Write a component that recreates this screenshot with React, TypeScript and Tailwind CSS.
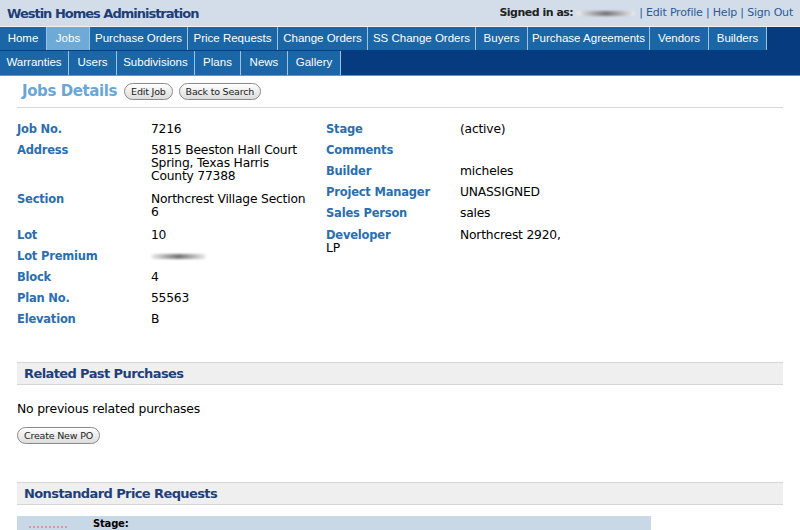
import React from "react";

const ROW1 = [
  { label: "Home", w: 47 },
  { label: "Jobs", w: 43, active: true },
  { label: "Purchase Orders", w: 98 },
  { label: "Price Requests", w: 90 },
  { label: "Change Orders", w: 90 },
  { label: "SS Change Orders", w: 108 },
  { label: "Buyers", w: 52 },
  { label: "Purchase Agreements", w: 122 },
  { label: "Vendors", w: 59 },
  { label: "Builders", w: 58 },
];

const ROW2 = [
  { label: "Warranties", w: 69 },
  { label: "Users", w: 48 },
  { label: "Subdivisions", w: 78 },
  { label: "Plans", w: 46 },
  { label: "News", w: 47 },
  { label: "Gallery", w: 53 },
];

function Tab({ label, w, active }: { label: string; w: number; active?: boolean }) {
  return (
    <div
      className={
        "h-full flex items-center justify-center border-r border-[#9fc2e2] text-[11.5px] text-white " +
        (active ? "bg-[#6eaad8]" : "bg-[#1a66a6]")
      }
      style={{ width: w }}
    >
      {label}
    </div>
  );
}

function Pill({ children }: { children: React.ReactNode }) {
  return (
    <span className="inline-flex items-center h-[17px] px-[6px] rounded-full border border-[#8a8a8a] bg-gradient-to-b from-white to-[#dcdcdc] text-[9.5px] text-[#222] leading-none tracking-[-0.2px]">
      {children}
    </span>
  );
}

function Field({ label, multi, children }: { label: string; multi?: boolean; children?: React.ReactNode }) {
  return (
    <div className={"flex " + (multi ? "mb-[10px]" : "mb-[8px]")}>
      <div className="w-[134px] shrink-0 font-bold text-[#2a6eae]">{label}</div>
      <div className="w-[162px] text-[12.3px]">{children}</div>
    </div>
  );
}

function Blur({ w }: { w: number }) {
  return <span className="inline-block h-[5px] rounded-full bg-gradient-to-r from-[#eee] via-[#777] to-[#eee] blur-[1px] align-middle" style={{ width: w }} />;
}

function SectionHead({ title }: { title: string }) {
  return (
    <div className="h-[23px] bg-[#efefef] border-y border-[#d6d6d6] flex items-center pl-[7px] text-[13px] font-bold text-[#1f3f78] tracking-[-0.6px]">
      {title}
    </div>
  );
}

export default function App() {
  return (
    <div className="w-[800px] h-[530px] overflow-hidden bg-white font-['DejaVu_Sans',sans-serif] text-[11.5px] text-black tracking-[-0.2px]">
      <div className="h-[27px] bg-[#d2dde9] flex items-center justify-between px-[7px] border-b border-[#eef3f8]">
        <div className="pt-[2px] text-[13px] font-bold text-[#1f3e78] tracking-[-1px]">Westin Homes Administration</div>
        <div className="text-[11px] flex items-center gap-[4px] text-[#2a5b96]">
          <span className="font-bold text-[#222] tracking-[-0.5px]">Signed in as:</span>
          <Blur w={58} />
          <span>| Edit Profile | Help | Sign Out</span>
        </div>
      </div>
      <div className="bg-[#073b7f] font-['Liberation_Sans',sans-serif] tracking-normal border-b border-[#6d94c0]">
        <div className="h-[24px] flex border-b border-[#073b7f]">
          {ROW1.map((t) => (
            <Tab key={t.label} {...t} />
          ))}
        </div>
        <div className="h-[24px] flex">
          {ROW2.map((t) => (
            <Tab key={t.label} {...t} />
          ))}
        </div>
      </div>

      <div className="px-[17px]">
        <div className="flex items-center gap-[6px] pl-[5px] h-[32px] border-b border-[#d8d8d8]">
          <span className="text-[15px] font-bold text-[#6aa6d6] tracking-[-0.4px] mr-[1px]">Jobs Details</span>
          <Pill>Edit Job</Pill>
          <Pill>Back to Search</Pill>
        </div>

        <div className="flex pt-[15px] leading-[13px]">
          <div className="w-[309px]">
            <Field label="Job No.">7216</Field>
            <Field label="Address" multi>
              5815 Beeston Hall Court Spring, Texas Harris County 77388
            </Field>
            <Field label="Section" multi>Northcrest Village Section 6</Field>
            <Field label="Lot">10</Field>
            <Field label="Lot Premium">
              <Blur w={55} />
            </Field>
            <Field label="Block">4</Field>
            <Field label="Plan No.">55563</Field>
            <Field label="Elevation">B</Field>
          </div>
          <div>
            <Field label="Stage">(active)</Field>
            <Field label="Comments"></Field>
            <Field label="Builder">micheles</Field>
            <Field label="Project Manager">UNASSIGNED</Field>
            <Field label="Sales Person">sales</Field>
            <div className="pt-[1px]">
              <div className="flex">
                <div className="w-[134px] font-bold text-[#2a6eae]">Developer</div>
                <div className="text-[12.3px]">Northcrest 2920,</div>
              </div>
              <div className="text-[12.3px]">LP</div>
            </div>
          </div>
        </div>

        <div className="mt-[28px]">
          <SectionHead title="Related Past Purchases" />
        </div>
        <div className="pt-[15px] text-[12.4px]">No previous related purchases</div>
        <div className="pt-[8px]">
          <Pill>Create New PO</Pill>
        </div>

        <div className="mt-[38px]">
          <SectionHead title="Nonstandard Price Requests" />
        </div>
        <div className="mt-[11px] w-[634px] h-[20px] bg-[#c9d8e6] flex items-start pt-[2px] pl-[12px] gap-[26px] text-[10px] leading-[12px]">
          <div className="mt-[8px] w-[38px] border-b-2 border-dotted border-[#d99]" />
          <span className="font-bold">Stage:</span>
        </div>
      </div>
    </div>
  );
}
